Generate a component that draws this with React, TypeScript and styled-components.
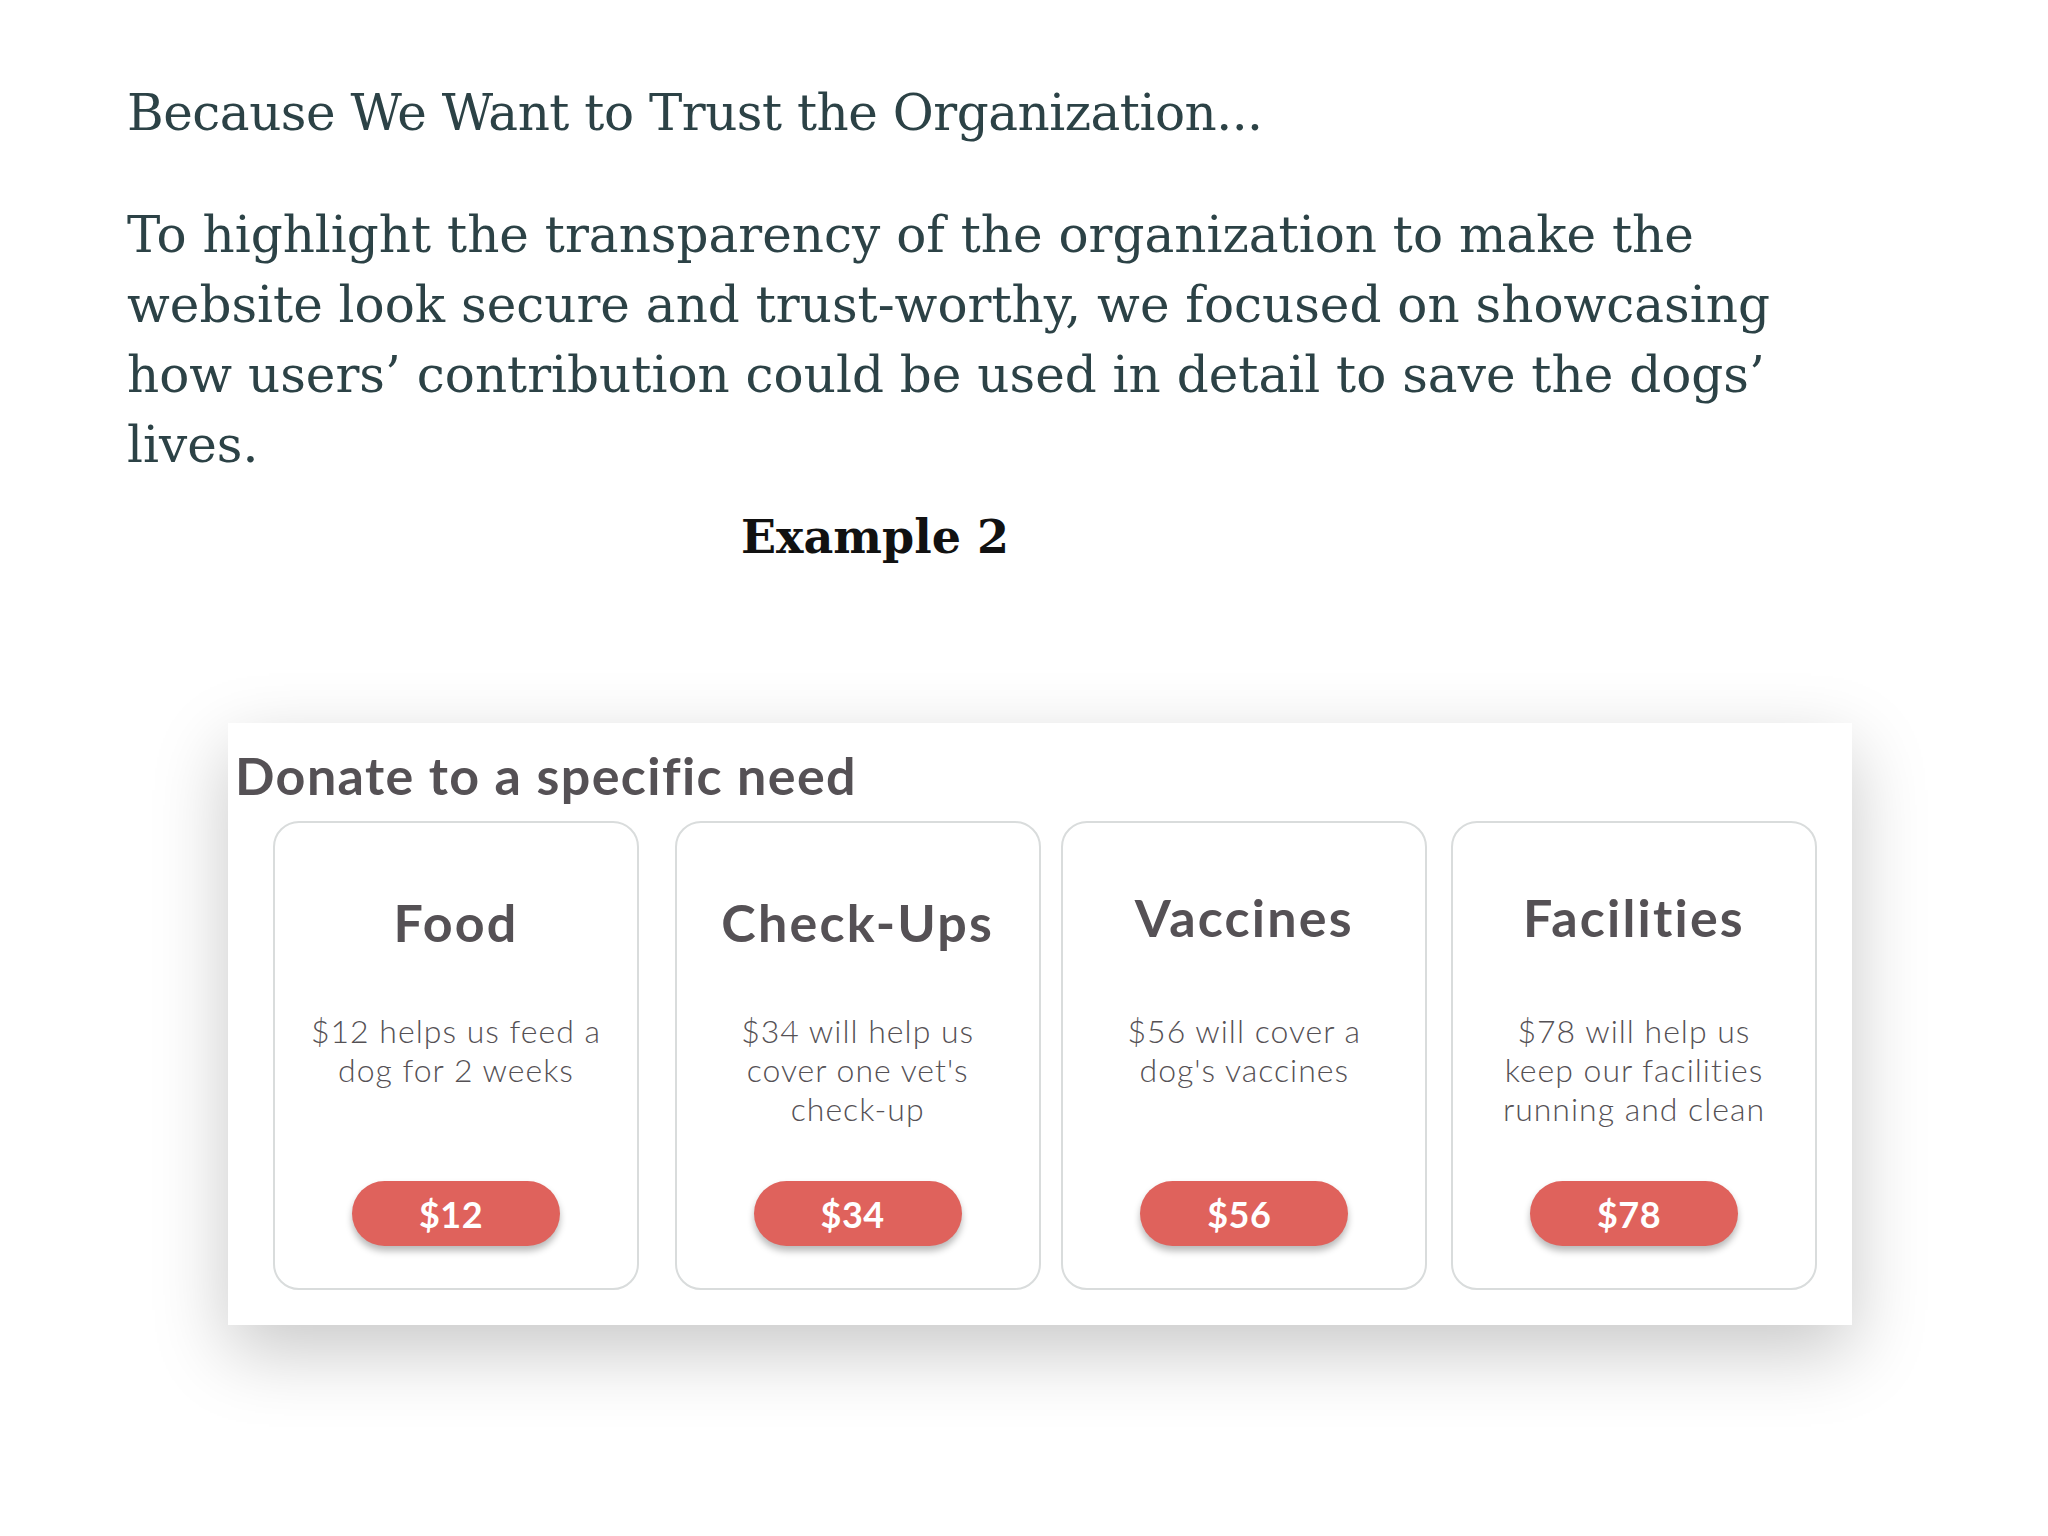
import React from "react";
import styled, { createGlobalStyle } from "styled-components";

const Global = createGlobalStyle`
  html, body { margin: 0; padding: 0; background: #ffffff; }
  body { width: 2048px; min-height: 1536px; }
`;

const Page = styled.main`
  padding: 78px 0 0 127px;
  box-sizing: border-box;
  width: 2048px;
  height: 1536px;
  overflow: hidden;
`;

const TextColumn = styled.section`
  width: 1496px;
  display: flex;
  flex-direction: column;
`;

const Lead = styled.h2`
  margin: 0;
  font-family: "DejaVu Serif", "Liberation Serif", serif;
  font-weight: 400;
  font-size: 50px;
  line-height: 70px;
  letter-spacing: -0.5px;
  color: #2c4246;
`;

const Body = styled.p`
  margin: 52px 0 0;
  font-family: "DejaVu Serif", "Liberation Serif", serif;
  font-size: 50px;
  line-height: 70px;
  color: #2c4246;
  width: 1720px;
`;

const Caption = styled.h3`
  margin: 27px 0 0;
  text-align: center;
  font-family: "DejaVu Serif", "Liberation Serif", serif;
  font-weight: 700;
  font-size: 46px;
  line-height: 60px;
  color: #111111;
`;

const Shot = styled.div`
  margin: 156px 0 0 101px;
  width: 1624px;
  height: 602px;
  background: #ffffff;
  box-shadow: 0 26px 70px rgba(0, 0, 0, 0.22);
  box-sizing: border-box;
  padding: 22px 35px 0 7px;
  display: flex;
  flex-direction: column;
`;

const ShotTitle = styled.h4`
  margin: 0;
  font-family: Lato, "Open Sans", sans-serif;
  font-weight: 700;
  font-size: 52px;
  line-height: 60px;
  letter-spacing: 1.4px;
  color: #555155;
`;

const Cards = styled.div`
  margin-top: 16px;
  padding-left: 38px;
  display: flex;
  justify-content: space-between;
`;

const Card = styled.div<{ $lift: number; $nudge: number }>`
  width: 366px;
  height: 469px;
  box-sizing: border-box;
  border: 2px solid #d9dcdc;
  border-radius: 26px;
  display: flex;
  flex-direction: column;
  align-items: center;
  transform: translateX(${(p) => p.$nudge}px);
  padding: ${(p) => 71 - p.$lift}px 12px 42px;
`;

const CardTitle = styled.div`
  font-family: Lato, "Open Sans", sans-serif;
  font-weight: 700;
  font-size: 52px;
  line-height: 56px;
  letter-spacing: 2.2px;
  color: #555155;
`;

const CardText = styled.div<{ $lift: number }>`
  margin-top: ${(p) => 61 + p.$lift}px;
  font-family: Lato, "Open Sans", sans-serif;
  font-weight: 300;
  font-size: 32px;
  line-height: 39px;
  letter-spacing: 1px;
  text-align: center;
  color: #555155;
`;

const Amount = styled.button`
  margin-top: auto;
  width: 208px;
  height: 65px;
  border: none;
  border-radius: 33px;
  background: #df625c;
  box-shadow: 0 5px 7px rgba(0, 0, 0, 0.28);
  color: #ffffff;
  font-family: Lato, "Open Sans", sans-serif;
  font-weight: 700;
  font-size: 36px;
  letter-spacing: 0.5px;
  padding: 0 10px 0 0;
`;

const needs = [
  { title: "Food", text: ["$12 helps us feed a", "dog for 2 weeks"], amount: "$12", lift: 0, nudge: 0 },
  { title: "Check-Ups", text: ["$34 will help us", "cover one vet's", "check-up"], amount: "$34", lift: 0, nudge: 9 },
  { title: "Vaccines", text: ["$56 will cover a", "dog's vaccines"], amount: "$56", lift: 5, nudge: 3 },
  { title: "Facilities", text: ["$78 will help us", "keep our facilities", "running and clean"], amount: "$78", lift: 5, nudge: 0 },
];

export default function App() {
  return (
    <>
      <Global />
      <Page>
        <TextColumn>
          <Lead>Because We Want to Trust the Organization...</Lead>
          <Body>
            To highlight the transparency of the organization to make the website look secure and
            trust-worthy, we focused on showcasing how users’ contribution could be used in detail to
            save the dogs’ lives.
          </Body>
          <Caption>Example 2</Caption>
        </TextColumn>
        <Shot>
          <ShotTitle>Donate to a specific need</ShotTitle>
          <Cards>
            {needs.map((n) => (
              <Card key={n.title} $lift={n.lift} $nudge={n.nudge}>
                <CardTitle>{n.title}</CardTitle>
                <CardText $lift={n.lift}>
                  {n.text.map((l) => (
                    <div key={l}>{l}</div>
                  ))}
                </CardText>
                <Amount>{n.amount}</Amount>
              </Card>
            ))}
          </Cards>
        </Shot>
      </Page>
    </>
  );
}
